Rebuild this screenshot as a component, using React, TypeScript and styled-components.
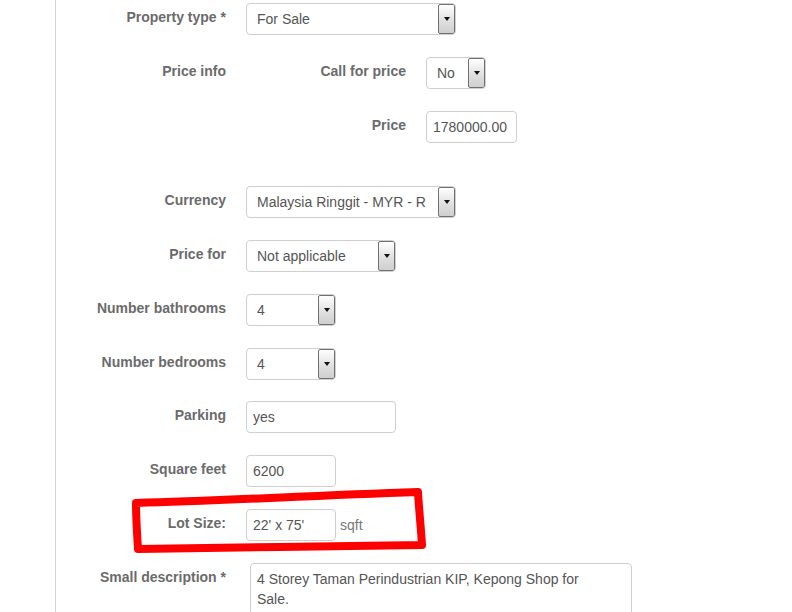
import React from "react";
import styled, { createGlobalStyle } from "styled-components";

const Global = createGlobalStyle`
  html, body { margin: 0; padding: 0; background: #fff; }
  body { font-family: "Liberation Sans", Arial, sans-serif; font-size: 14px; overflow: hidden; }
`;

const Page = styled.div`
  position: relative;
  width: 792px;
  height: 612px;
  overflow: hidden;
`;

const Panel = styled.div`
  margin-left: 55px;
  border-left: 1px solid #d4d4d4;
  padding-top: 3px;
  min-height: 700px;
`;

const Row = styled.div<{ $cols?: number; $mb?: number }>`
  display: grid;
  grid-template-columns: ${(p) => p.$cols ?? 170}px 1fr;
  column-gap: 20px;
  align-items: start;
  margin-bottom: ${(p) => p.$mb ?? 22}px;
`;

const Label = styled.div`
  text-align: right;
  font-weight: bold;
  color: #6b6b6b;
  font-size: 14px;
  line-height: 20px;
  padding-top: 4px;
  white-space: nowrap;
`;

const Controls = styled.div`
  display: flex;
  align-items: center;
  gap: 4px;
`;

const Nested = styled.div`
  display: flex;
  flex-direction: column;
  gap: 22px;
`;

const SelectBox = styled.div<{ $w: number }>`
  position: relative;
  box-sizing: border-box;
  width: ${(p) => p.$w}px;
  height: 32px;
  border: 1px solid #cfcfcf;
  border-radius: 4px;
  background: #fff;
  color: #555;
  font-size: 14px;
  line-height: 31px;
  padding-left: 10px;
  white-space: nowrap;
  overflow: hidden;
`;

const SelectButton = styled.span`
  position: absolute;
  top: 0;
  right: 0;
  width: 17px;
  height: 30px;
  box-sizing: border-box;
  border: 1px solid #707070;
  border-radius: 2px;
  background: linear-gradient(#ffffff, #dedede 60%, #cfcfcf);
  display: flex;
  align-items: center;
  justify-content: center;
  &::after {
    content: "";
    border-left: 3px solid transparent;
    border-right: 3px solid transparent;
    border-top: 4px solid #111;
  }
`;

const Input = styled.div<{ $w: number }>`
  box-sizing: border-box;
  width: ${(p) => p.$w}px;
  height: 32px;
  border: 1px solid #cfcfcf;
  border-radius: 4px;
  background: #fff;
  color: #555;
  font-size: 14px;
  line-height: 30px;
  padding-left: 6px;
  white-space: nowrap;
  overflow: hidden;
`;

const Unit = styled.span`
  color: #777;
  font-size: 14px;
`;

const TextArea = styled.div`
  box-sizing: border-box;
  width: 382px;
  height: 80px;
  margin-left: 4px;
  border: 1px solid #cfcfcf;
  border-radius: 4px;
  color: #555;
  font-size: 14px;
  line-height: 20px;
  padding: 5px 6px;
  white-space: pre-line;
`;

const Marker = styled.svg`
  position: absolute;
  left: 0;
  top: 0;
  pointer-events: none;
`;

const Select = ({ w, children }: { w: number; children: React.ReactNode }) => (
  <SelectBox $w={w}>
    {children}
    <SelectButton />
  </SelectBox>
);

export default function App() {
  return (
    <Page>
      <Global />
      <Panel>
        <Row>
          <Label>Property type *</Label>
          <Controls>
            <Select w={210}>For Sale</Select>
          </Controls>
        </Row>
        <Row $mb={43}>
          <Label>Price info</Label>
          <Nested>
            <Row $cols={160} $mb={0}>
              <Label>Call for price</Label>
              <Controls>
                <Select w={60}>No</Select>
              </Controls>
            </Row>
            <Row $cols={160} $mb={0}>
              <Label>Price</Label>
              <Controls>
                <Input $w={91}>1780000.00</Input>
              </Controls>
            </Row>
          </Nested>
        </Row>
        <Row>
          <Label>Currency</Label>
          <Controls>
            <Select w={210}>Malaysia Ringgit - MYR - R</Select>
          </Controls>
        </Row>
        <Row>
          <Label>Price for</Label>
          <Controls>
            <Select w={150}>Not applicable</Select>
          </Controls>
        </Row>
        <Row>
          <Label>Number bathrooms</Label>
          <Controls>
            <Select w={90}>4</Select>
          </Controls>
        </Row>
        <Row $mb={21}>
          <Label>Number bedrooms</Label>
          <Controls>
            <Select w={90}>4</Select>
          </Controls>
        </Row>
        <Row>
          <Label>Parking</Label>
          <Controls>
            <Input $w={150}>yes</Input>
          </Controls>
        </Row>
        <Row>
          <Label>Square feet</Label>
          <Controls>
            <Input $w={90}>6200</Input>
          </Controls>
        </Row>
        <Row>
          <Label>Lot Size:</Label>
          <Controls>
            <Input $w={90}>22' x 75'</Input>
            <Unit>sqft</Unit>
          </Controls>
        </Row>
        <Row>
          <Label>Small description *</Label>
          <Controls>
            <TextArea>{"4 Storey Taman Perindustrian KIP, Kepong Shop for\nSale."}</TextArea>
          </Controls>
        </Row>
      </Panel>
      <Marker width={792} height={612} viewBox="0 0 792 612">
        <path
          d="M136 503 C 220 501, 300 496, 418 492 C 419 510, 421 528, 422 545 C 330 546, 230 548, 138 549 C 137 533, 136 518, 136 503 Z"
          fill="none"
          stroke="#ff0000"
          strokeWidth={8}
          strokeLinejoin="round"
        />
      </Marker>
    </Page>
  );
}
